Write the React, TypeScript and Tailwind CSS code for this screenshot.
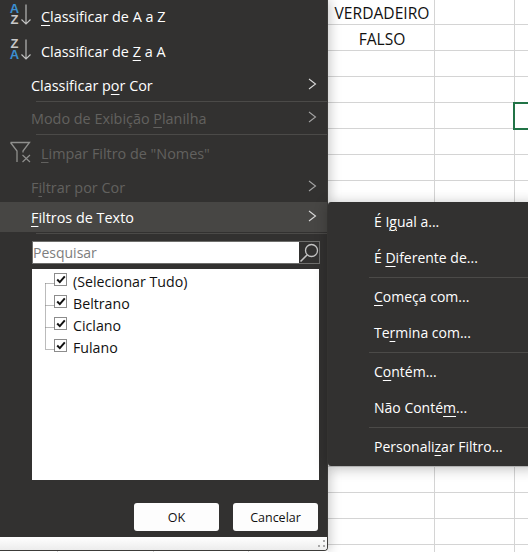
import React from "react";

const FONT = "font-['Open_Sans','Noto_Sans',sans-serif]";

function Chevron({ dim }: { dim?: boolean }) {
  return (
    <svg width="9" height="12" viewBox="0 0 9 12" className="absolute left-[308px] top-[calc(50%-7px)]" fill="none">
      <path d="M1 1l6.5 5L1 11" stroke={dim ? "#a3a3a3" : "#d8d8d8"} strokeWidth="1.1" />
    </svg>
  );
}

function U({ children }: { children: React.ReactNode }) {
  return <span className="underline underline-offset-[3px] decoration-1">{children}</span>;
}

function SortIcon({ top, bottom, topBlue, y }: { top: string; bottom: string; topBlue: boolean; y: string }) {
  return (
    <div className={`absolute left-[9px] ${y} flex h-[21px] w-[22px]`}>
      <div className="flex w-[11px] flex-col items-center font-['Liberation_Sans',sans-serif] text-[13px] font-bold leading-[10.5px]">
        <span className={topBlue ? "text-[#3b8fd0]" : "text-[#c8c8c8]"}>{top}</span>
        <span className={topBlue ? "text-[#c8c8c8]" : "text-[#3b8fd0]"}>{bottom}</span>
      </div>
      <svg width="11" height="21" viewBox="0 0 11 21" fill="none">
        <path d="M6 0.5v19.5M1.5 15.5L6 20l4.5-4.5" stroke="#c4c4c4" strokeWidth="1.1" />
      </svg>
    </div>
  );
}

function MenuRow({
  h,
  pl,
  children,
  dim,
  chevron,
  hover,
  icon,
}: {
  h: string;
  pl: string;
  children: React.ReactNode;
  dim?: boolean;
  chevron?: boolean;
  hover?: boolean;
  icon?: React.ReactNode;
}) {
  return (
    <div className={`relative flex shrink-0 items-center ${h} ${pl} ${hover ? "bg-[#474644]" : ""} ${dim ? "text-[#62615f]" : "text-white"}`}>
      {icon}
      <span>{children}</span>
      {chevron && <Chevron dim={dim} />}
    </div>
  );
}

function Sep() {
  return <div className="ml-[36px] h-px shrink-0 bg-[#4b4a48]" />;
}

function Check({ label }: { label: string }) {
  return (
    <div className="flex h-[22px] items-start pl-[22px]">
      <span className="mt-[3px] flex h-[13px] w-[13px] items-center justify-center border border-[#8c8c8c] bg-white">
        <svg width="10" height="9" viewBox="0 0 10 9" fill="none">
          <path d="M1.2 4.5l2.6 2.6L8.8 1.4" stroke="#111" strokeWidth="2" />
        </svg>
      </span>
      <span className="ml-[6px] translate-y-px self-center text-[14.2px] text-[#111]">{label}</span>
    </div>
  );
}

function SubRow({ children }: { children: React.ReactNode }) {
  return (
    <div className="flex h-[36px] items-center pl-[46px] text-white">
      <span className="-translate-y-px">{children}</span>
    </div>
  );
}

function SubSep() {
  return <div className="my-px ml-[41px] h-px bg-[#4b4a48]" />;
}

const rows = Array.from({ length: 22 }, (_, i) => i);

export default function App() {
  return (
    <div className={`relative flex h-[552px] w-[528px] overflow-hidden bg-white text-[14px] ${FONT}`}>
      <div className="relative z-10 flex h-[552px] w-[328px] shrink-0 flex-col text-[14.4px]">
        <div className="flex h-[551px] flex-col overflow-hidden rounded-br-[4px] border-r border-b border-[#3c3b39] shadow-[2px_0_12px_rgba(0,0,0,0.22)]">
          <div className="flex flex-1 flex-col bg-[#323130]">
            <MenuRow h="h-[33px]" pl="pl-[41px]" icon={<SortIcon top="A" bottom="Z" topBlue y="top-[4px]" />}>
              <U>C</U>lassificar de A a Z
            </MenuRow>
            <MenuRow h="h-[36px] pt-px" pl="pl-[41px]" icon={<SortIcon top="Z" bottom="A" topBlue={false} y="top-[6px]" />}>
              Classificar de <U>Z</U> a A
            </MenuRow>
            <MenuRow h="h-[32px] pt-[2px]" pl="pl-[31px]" chevron>
              Classificar p<U>o</U>r Cor
            </MenuRow>
            <Sep />
            <MenuRow h="h-[32px] pt-[2px]" pl="pl-[31px]" dim chevron>
              Modo de Exibição <U>P</U>lanilha
            </MenuRow>
            <Sep />
            <MenuRow
              h="h-[36px] pt-[2px]"
              pl="pl-[41px]"
              dim
              icon={
                <svg width="22" height="22" viewBox="0 0 22 22" fill="none" className="absolute left-[9px] top-[6px]">
                  <path d="M1.5 1.5h19l-6.5 8.5v1.5M1.5 1.5l6.5 8.5v11" stroke="#8f8f8d" strokeWidth="1.3" />
                  <path d="M13.5 14l7.5 7M21 14l-7.5 7" stroke="#8f8f8d" strokeWidth="1.2" />
                </svg>
              }
            >
              <U>L</U>impar Filtro de "Nomes"
            </MenuRow>
            <MenuRow h="h-[31px] pt-[2px]" pl="pl-[31px]" dim chevron>
              F<U>i</U>ltrar por Cor
            </MenuRow>
            <MenuRow h="h-[30px] pt-[2px]" pl="pl-[31px]" hover chevron>
              <U>F</U>iltros de Texto
            </MenuRow>
            <div className="h-px" />
            <Sep />

            <div className="ml-[32px] mt-[7px] flex h-[23px] w-[288px] border border-[#6e6e6c]">
              <div className="flex flex-1 items-center bg-white text-[14px] text-[#7d7d7d]">Pesquisar</div>
              <div className="flex w-[20px] items-center justify-center bg-[#323130]">
                <svg width="20" height="21" viewBox="0 0 20 21" fill="none">
                  <circle cx="12.5" cy="8.5" r="6" stroke="#c4c4c4" strokeWidth="1.3" />
                  <path d="M8 13L1.5 19.5" stroke="#c4c4c4" strokeWidth="1.6" />
                </svg>
              </div>
            </div>

            <div className="relative ml-[32px] mt-[5px] h-[211px] w-[287px] bg-white pt-[1px]">
              <svg width="12" height="70" viewBox="0 0 12 70" fill="none" className="absolute left-[13px] top-[13px]">
                <path d="M0.5 1.5V67 M0.5 1.5H10 M0.5 23.5H10 M0.5 45.5H10 M0.5 67.5H10" stroke="#777" strokeWidth="1" strokeDasharray="1 1" />
              </svg>
              <Check label="(Selecionar Tudo)" />
              <Check label="Beltrano" />
              <Check label="Ciclano" />
              <Check label="Fulano" />
            </div>

            <div className="mt-[23px] flex justify-end gap-[14px] pr-[9px]">
              <button className="h-[28px] w-[85px] rounded-[3px] bg-[#fdfdfd] pt-[2px] text-[12.5px] text-[#111]">OK</button>
              <button className="h-[28px] w-[85px] rounded-[3px] bg-[#fdfdfd] pt-[2px] text-[12.5px] text-[#111]">Cancelar</button>
            </div>
            <div className="h-[6px]" />
          </div>
          <div className="relative h-[13px] shrink-0 bg-gradient-to-b from-[#ffffff] to-[#ececec]">
            <svg width="8" height="8" viewBox="0 0 8 8" className="absolute bottom-[2px] right-[1px]" fill="#a8a8a8">
              <rect x="5" y="0" width="2" height="2" />
              <rect x="0" y="5" width="2" height="2" />
              <rect x="5" y="5" width="2" height="2" />
            </svg>
          </div>
        </div>
        <div className="flex h-px bg-white">
          <span className="ml-[57px] h-px w-px bg-[#d4d4d4]" />
          <span className="ml-[95px] h-px w-px bg-[#d4d4d4]" />
          <span className="ml-[94px] h-px w-px bg-[#d4d4d4]" />
        </div>
      </div>

      <div className="flex-1 text-[15.6px] text-[#111]">
        {rows.map((r) => (
          <div key={r} className={`grid grid-cols-[107px_80px_1fr] ${r === 0 ? "h-[25px]" : "h-[26px]"}`}>
            <div className="flex items-center justify-center border-r border-b border-[#d4d4d4] pl-[2px]">
              <span className="translate-y-[2px]">{r === 0 ? "VERDADEIRO" : r === 1 ? "FALSO" : ""}</span>
            </div>
            <div className="border-r border-b border-[#d4d4d4]" />
            <div className="relative border-b border-[#d4d4d4]">
              {r === 4 && <div className="absolute -left-[2px] -top-[1px] -bottom-[2px] -right-[4px] border-2 border-[#217346]" />}
            </div>
          </div>
        ))}
      </div>

      <div className="absolute left-[328px] top-[202px] z-20 h-[264px] w-[210px] rounded-l-[3px] bg-[#323130] pt-[2px] shadow-[0_2px_14px_rgba(0,0,0,0.28)]">
        <SubRow>É I<U>g</U>ual a...</SubRow>
        <SubRow>É <U>D</U>iferente de...</SubRow>
        <SubSep />
        <SubRow><U>C</U>omeça com...</SubRow>
        <SubRow>Te<U>r</U>mina com...</SubRow>
        <SubSep />
        <SubRow>C<U>o</U>ntém...</SubRow>
        <SubRow>Não Conté<U>m</U>...</SubRow>
        <SubSep />
        <SubRow>Personali<U>z</U>ar Filtro...</SubRow>
      </div>
    </div>
  );
}
